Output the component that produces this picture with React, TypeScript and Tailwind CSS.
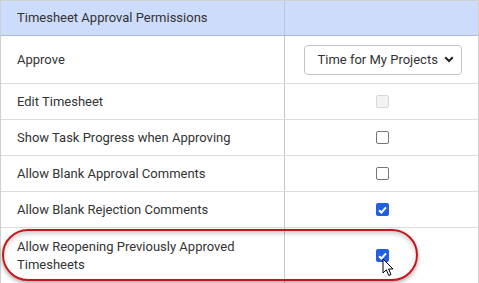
import React from "react";

type Row = {
  label: React.ReactNode;
  kind: "select" | "disabled" | "off" | "on";
  height: string;
};

const rows: Row[] = [
  { label: "Approve", kind: "select", height: "h-[48px]" },
  { label: "Edit Timesheet", kind: "disabled", height: "h-[36px]" },
  { label: "Show Task Progress when Approving", kind: "off", height: "h-[36px]" },
  { label: "Allow Blank Approval Comments", kind: "off", height: "h-[36px]" },
  { label: "Allow Blank Rejection Comments", kind: "on", height: "h-[36px]" },
];

const Box = ({ kind }: { kind: "disabled" | "off" | "on" }) => {
  if (kind === "on") {
    return (
      <span className="flex h-[13px] w-[13px] items-center justify-center rounded-[2px] bg-[#1f5fe0]">
        <svg width="9" height="8" viewBox="0 0 9 8">
          <path d="M1 4.2 L3.4 6.5 L8 1.4" fill="none" stroke="#fff" strokeWidth="2" />
        </svg>
      </span>
    );
  }
  return (
    <span
      className={
        kind === "disabled"
          ? "block h-[13px] w-[13px] rounded-[2px] border border-[#d8d8d8] bg-[#f2f2f2]"
          : "block h-[13px] w-[13px] rounded-[2px] border border-[#767676] bg-white"
      }
    />
  );
};

const Cell = ({ row }: { row: Row }) => {
  if (row.kind === "select") {
    return (
      <div className="flex justify-center pl-[2px]">
        <div className="flex h-[30px] w-[158px] items-center justify-between rounded-[4px] border border-[#c4c4c4] bg-white pl-[13px] pr-[7px]">
          <span>Time for My Projects</span>
          <svg width="10" height="7" viewBox="0 0 10 7">
            <path d="M1.2 1.3 L5 5 L8.8 1.3" fill="none" stroke="#222" strokeWidth="2" />
          </svg>
        </div>
      </div>
    );
  }
  return (
    <div className="flex justify-center pl-[2px]">
      <Box kind={row.kind} />
    </div>
  );
};

export default function App() {
  return (
    <div className="relative h-[283px] w-[479px] overflow-hidden bg-white font-['Roboto',sans-serif] text-[13px] text-[#333]">
      <div className="flex h-full flex-col border border-[#cfcfcf] border-b-0">
        <div className="flex h-[35px] shrink-0 border-b border-[#aeb9d4] bg-[#cddcfb]">
          <div className="flex w-[284px] items-center border-r border-[#b9c4de] pl-[16px]">
            Timesheet Approval Permissions
          </div>
          <div className="flex-1" />
        </div>
        {rows.map((row, i) => (
          <div key={i} className={`flex ${row.height} shrink-0 border-b border-[#dddddd]`}>
            <div className="flex w-[284px] items-center border-r border-[#c8c8c8] pl-[16px]">
              {row.label}
            </div>
            <div className="flex flex-1 items-center">
              <div className="w-full">
                <Cell row={row} />
              </div>
            </div>
          </div>
        ))}
        <div className="flex flex-1">
          <div className="flex w-[284px] items-center border-r border-[#c8c8c8] pl-[16px] leading-[18px]">
            Allow Reopening Previously Approved
            <br />
            Timesheets
          </div>
          <div className="flex flex-1 items-center justify-center pl-[2px]">
            <Box kind="on" />
          </div>
        </div>
      </div>

      <div className="pointer-events-none absolute left-[2px] top-[229px] h-[52px] w-[416px] rounded-[26px] border-2 border-[#c4161c] shadow-[0_2px_4px_rgba(0,0,0,0.35),inset_0_3px_4px_rgba(0,0,0,0.18)]" />

      <svg className="absolute left-[382px] top-[258px]" width="14" height="20" viewBox="0 0 14 20">
        <path
          d="M1 1 L1 15 L4.3 11.8 L6.8 17.5 L9 16.5 L6.6 11 L11 11 Z"
          fill="#fff"
          stroke="#000"
          strokeWidth="1"
          strokeLinejoin="round"
        />
      </svg>
    </div>
  );
}
